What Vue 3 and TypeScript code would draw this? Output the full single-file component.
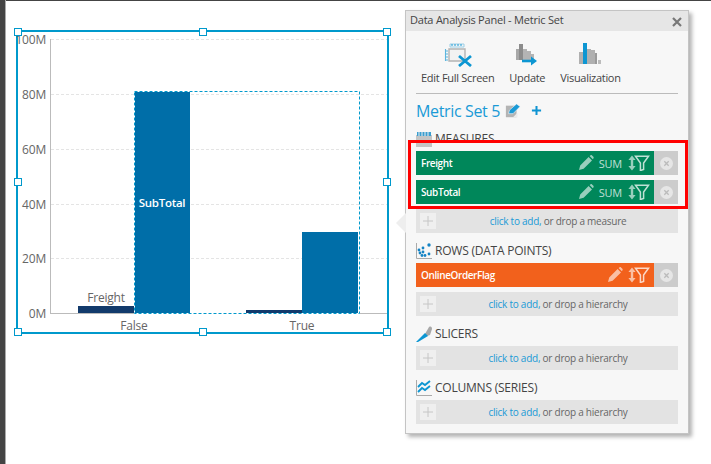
<script setup lang="ts">
interface Field { name: string; color: string; sum: boolean }
interface Section { title: string; icon: string; fields: Field[]; drop: string }

const sections: Section[] = [
  {
    title: 'MEASURES',
    icon: 'measures',
    drop: 'measure',
    fields: [
      { name: 'Freight', color: 'green', sum: true },
      { name: 'SubTotal', color: 'green', sum: true },
    ],
  },
  {
    title: 'ROWS (DATA POINTS)',
    icon: 'rows',
    drop: 'hierarchy',
    fields: [{ name: 'OnlineOrderFlag', color: 'orange', sum: false }],
  },
  { title: 'SLICERS', icon: 'slicers', drop: 'hierarchy', fields: [] },
  { title: 'COLUMNS (SERIES)', icon: 'columns', drop: 'hierarchy', fields: [] },
]

const grid = [
  { y: 39, label: '100M' },
  { y: 94, label: '80M' },
  { y: 149, label: '60M' },
  { y: 204, label: '40M' },
  { y: 258, label: '20M' },
  { y: 313, label: '0M' },
]

const handles = [
  [0, 0], [50, 0], [100, 0],
  [0, 50], [100, 50],
  [0, 100], [50, 100], [100, 100],
]
</script>

<template>
  <div class="page">
    <div class="strip"></div>
    <div class="canvas">
      <div class="selection">
        <svg class="chart" viewBox="18 32 369 300" width="369" height="300">
          <line v-for="g in grid.slice(0, 5)" :key="g.y" x1="51" :x2="387" :y1="g.y + 0.5" :y2="g.y + 0.5" class="gridline" />
          <line x1="50.5" x2="50.5" y1="39" y2="314" class="axis" />
          <line x1="50" x2="387" y1="313.5" y2="313.5" class="axis" />
          <text v-for="g in grid" :key="g.label" x="46" :y="g.y + 4.5" text-anchor="end" class="tick">{{ g.label }}</text>
          <rect x="78" y="306" width="56" height="7" fill="#123a6b" />
          <rect x="135" y="92" width="55" height="221" fill="#006ea8" />
          <rect x="246" y="310" width="56" height="3" fill="#123a6b" />
          <rect x="302" y="232" width="56" height="81" fill="#006ea8" />
          <rect x="134.5" y="91.5" width="225" height="222" class="dash-under" />
          <rect x="134.5" y="91.5" width="225" height="222" class="dash-over" />
          <text x="106" y="302" text-anchor="middle" class="tick">Freight</text>
          <text x="162" y="207" text-anchor="middle" class="inside">SubTotal</text>
          <text x="134" y="330" text-anchor="middle" class="tick">False</text>
          <text x="302" y="330" text-anchor="middle" class="tick">True</text>
        </svg>
        <span
          v-for="h in handles"
          :key="h.join('-')"
          class="handle"
          :style="{ left: h[0] + '%', top: h[1] + '%' }"
        ></span>
      </div>

      <aside class="panel">
        <span class="pointer"></span>
        <header class="panel-head">
          <span>Data Analysis Panel - Metric Set</span>
          <svg class="close" viewBox="0 0 10 10" width="10" height="10">
            <path d="M1 1 9 9M9 1 1 9" stroke="#777" stroke-width="2.2" fill="none" />
          </svg>
        </header>
        <div class="panel-body">
          <nav class="toolbar">
            <div class="tool">
              <svg viewBox="0 0 28 24" width="28" height="24">
                <path d="M6 1h14v3H6z" fill="none" stroke="#9ccfe6" stroke-width="1" />
                <path d="M8 1v2M11 1v2M14 1v2M17 1v2" stroke="#1a9ad6" stroke-width="1" />
                <path d="M5 6h16v12H5z" fill="#f2f2f2" stroke="#b4b4b4" stroke-width="1.4" />
                <path d="M1.5 6v12M1 8h3M1 11h3M1 14h3M1 17h3" stroke="#5cb5dd" stroke-width="1.1" fill="none" />
                <path d="M15 13l12 10M27 13 15 23" stroke="#0d96d2" stroke-width="2.8" />
              </svg>
              <span>Edit Full Screen</span>
            </div>
            <div class="tool">
              <svg viewBox="0 0 22 24" width="22" height="24">
                <path d="M0 6h3v11H0z" fill="#a8a8a8" />
                <path d="M3 1h4v16H3z" fill="#8c8c8c" />
                <path d="M7 6h4v11H7zM11 8h4v9h-4zM15 11h3v6h-3z" fill="#b4b4b4" />
                <path d="M6 18h12" stroke="#0d96d2" stroke-width="2.6" />
                <path d="M15 13.5 21 18l-6 4.5z" fill="#0d96d2" />
              </svg>
              <span>Update</span>
            </div>
            <div class="tool">
              <svg viewBox="0 0 24 24" width="24" height="24">
                <path d="M1 9h4v12H1z" fill="#b0b0b0" />
                <path d="M5 0h4v21H5z" fill="#0d96d2" />
                <path d="M9 6h4v15H9zM13 7h4v14h-4z" fill="#b0b0b0" />
                <path d="M17 10h2v11h-2z" fill="#9a9a9a" />
                <path d="M20 17h3v4h-3z" fill="#bcbcbc" />
              </svg>
              <span>Visualization</span>
            </div>
          </nav>

          <div class="title">
            <span>Metric Set 5</span>
            <svg viewBox="0 0 18 18" width="16" height="16">
              <path d="M1 3h12v13H1z" fill="#b4b4b4" />
              <path d="M9 16l5-5v5z" fill="#ececec" />
              <path d="M4 12l1-4 8-7 4 3-8 8z" fill="#1a9ad6" stroke="#f7f7f7" stroke-width=".7" />
            </svg>
            <svg class="plus" viewBox="0 0 12 12" width="11" height="11">
              <path d="M6 1v10M1 6h10" stroke="#0f94d2" stroke-width="2.2" />
            </svg>
          </div>

          <section v-for="s in sections" :key="s.title" class="section">
            <h3 class="heading">
              <svg viewBox="0 0 16 16" width="16" height="16">
                <template v-if="s.icon === 'measures'">
                  <path d="M0 4h16v12H0z" fill="#c4c4c4" />
                  <path d="M1 1h14v4H1z" fill="#3a9ed0" />
                  <path d="M3 1v4M6 1v4M9 1v4M12 1v4" stroke="#f0f0f0" stroke-width="1" />
                </template>
                <template v-else-if="s.icon === 'rows'">
                  <path d="M.5 0v15.5H16" stroke="#aaa" fill="none" />
                  <g fill="#1583c4">
                    <circle cx="3" cy="7" r="1.4" /><circle cx="7" cy="5" r="1.4" /><circle cx="13" cy="2" r="1.7" />
                    <circle cx="4" cy="10" r="1.4" /><circle cx="7" cy="9" r="1.4" /><circle cx="6" cy="12.5" r="1.4" />
                    <circle cx="9" cy="12.5" r="1.4" /><circle cx="13" cy="11" r="1.4" />
                  </g>
                </template>
                <template v-else-if="s.icon === 'slicers'">
                  <path d="M9 8 13 1c2-1 3 0 3 2l-2 6-3 1z" fill="#a8a8a8" />
                  <path d="M0 16 9 7l3 3-5 3-5 3z" fill="#0d96d2" />
                </template>
                <template v-else>
                  <path d="M.5 0v15.5H16" stroke="#aaa" fill="none" />
                  <path d="M2 7l4-4 3 2 5-4M2 12l4-4 3 2 5-4" stroke="#0d96d2" stroke-width="1.9" fill="none" />
                </template>
              </svg>
              <span class="heading-text">{{ s.title }}</span>
            </h3>
            <div v-for="f in s.fields" :key="f.name" class="field">
              <div class="field-main" :class="f.color">
                <span class="field-name">{{ f.name }}</span>
                <svg class="pencil" viewBox="0 0 16 16" width="16" height="16">
                  <path d="M1 15l1.2-4.6L10.6 2l3.4 3.4-8.4 8.4zM11.6 1l.8-.6c.6-.4 1-.4 1.6 0l1.4 1.4c.4.6.4 1 0 1.6l-.6.8z" />
                </svg>
                <span v-if="f.sum" class="sum">SUM</span>
                <svg class="sort" viewBox="0 0 22 16" width="22" height="16">
                  <path d="M4 .5 7.6 5H5.2v6h2.4L4 15.5.4 11h2.4V5H.4z" />
                  <path d="M7.5 1.2h13L15.6 8v6.5l-3.2 1V8z" fill="none" class="funnel" />
                </svg>
              </div>
              <div class="field-remove">
                <svg viewBox="0 0 12 12" width="13" height="13">
                  <circle cx="6" cy="6" r="6" fill="#e6e6e6" />
                  <path d="M4 4l4 4M8 4 4 8" stroke="#bbb" stroke-width="1.2" />
                </svg>
              </div>
            </div>
            <div class="drop">
              <span class="drop-plus">
                <svg viewBox="0 0 10 10" width="10" height="10">
                  <path d="M5 0v10M0 5h10" stroke="#c6c6c6" stroke-width="1" />
                </svg>
              </span>
              <span class="drop-text"><span class="link">click to add,</span> or drop a {{ s.drop }}</span>
            </div>
          </section>
        </div>
        <div class="highlight"></div>
      </aside>
    </div>
  </div>
</template>

<style>
html, body { margin: 0; background: #fff; }
</style>

<style scoped>
.page {
  width: 711px;
  height: 464px;
  display: flex;
  overflow: hidden;
  background: #fff;
  font-family: "Open Sans", "Noto Sans", sans-serif;
}
.strip {
  width: 5px;
  flex: none;
  background: #444;
  border-right: 1px solid #aaa;
}
.canvas {
  position: relative;
  flex: 1;
  border-top: 1px solid #444;
}
.selection {
  position: absolute;
  left: 10px;
  top: 29px;
  width: 369px;
  height: 300px;
  border: 2px solid #0099cc;
}
.chart { display: block; overflow: visible; }
.gridline { stroke: #e4e4e4; stroke-dasharray: 3 2; }
.axis { stroke: #bbb; }
.tick { font-size: 12px; letter-spacing: -.2px; fill: #666; }
.inside { font-size: 11.5px; font-weight: 600; letter-spacing: -.3px; fill: #fff; }
.dash-under { fill: none; stroke: #fff; }
.dash-over { fill: none; stroke: #0099cc; stroke-dasharray: 3 2; }
.handle {
  position: absolute;
  box-sizing: border-box;
  width: 8px;
  height: 8px;
  margin: -4px 0 0 -4px;
  background: #fff;
  border: 1px solid #0099cc;
}
.panel {
  position: absolute;
  left: 399px;
  top: 9px;
  width: 282px;
  height: 422px;
  background: #f7f7f7;
  border: 1px solid #c4c4c4;
  box-shadow: 3px 3px 4px rgba(0, 0, 0, .3);
  color: #444;
}
.pointer {
  position: absolute;
  left: -10px;
  top: 202px;
  width: 0;
  height: 0;
  border: solid transparent;
  border-width: 10px 10px 10px 0;
  border-right-color: #eee;
}
.panel-head {
  box-sizing: border-box;
  height: 20px;
  padding: 0 6px 3px 4px;
  display: flex;
  align-items: center;
  justify-content: space-between;
  background: #e6e6e6;
  font-size: 11px;
  letter-spacing: -.22px;
  color: #444;
}
.close { margin-top: 5px; }
.panel-body { padding: 0 10px; }
.toolbar {
  display: flex;
  gap: 15px;
  padding: 12px 5px 8px;
  border-bottom: 1px solid #bbb;
}
.tool {
  display: flex;
  flex-direction: column;
  align-items: center;
  gap: 4px;
  font-size: 11px;
  line-height: 14px;
  letter-spacing: -.3px;
  color: #444;
}
.title {
  display: flex;
  align-items: center;
  gap: 5px;
  height: 21px;
  margin-top: 6px;
  font-size: 16px;
  letter-spacing: -.35px;
  color: #1a9ad6;
}
.plus { margin-left: 5px; }
.heading {
  box-sizing: border-box;
  height: 30px;
  margin: 0;
  padding: 10px 0 4px;
  display: flex;
  align-items: center;
  gap: 3px;
  font-size: 12px;
  font-weight: 400;
  letter-spacing: -.22px;
  color: #444;
}
.heading-text { margin-bottom: 2px; }
.field {
  display: flex;
  height: 24px;
  margin-bottom: 5px;
}
.field-main {
  flex: 1;
  display: flex;
  align-items: center;
  padding: 0 4px 0 5px;
  color: #fff;
}
.field-main.green { background: #00875a; }
.field-main.orange { background: #f2611c; }
.field-name { flex: 1; font-size: 10px; font-weight: 600; letter-spacing: -.4px; margin-bottom: 1px; }
.pencil, .sort { fill: rgba(255, 255, 255, .6); }
.pencil { margin-right: 5px; }
.sum { font-size: 11px; letter-spacing: -.2px; color: rgba(255, 255, 255, .75); margin-right: 6px; }
.funnel { stroke: rgba(255, 255, 255, .75); stroke-width: 1.5; }
.field-remove {
  width: 24px;
  display: flex;
  align-items: center;
  justify-content: center;
  background: #ccc;
}
.drop {
  height: 24px;
  padding: 0 4px;
  display: flex;
  align-items: center;
  background: #e3e3e3;
  font-size: 10px;
  letter-spacing: -.25px;
  color: #666;
}
.drop-plus {
  width: 16px;
  height: 16px;
  display: flex;
  align-items: center;
  justify-content: center;
  background: #efefef;
}
.drop-text { flex: 1; text-align: center; padding-left: 6px; }
.link { color: #1a9ad6; }
.highlight {
  position: absolute;
  left: 2px;
  top: 129px;
  width: 274px;
  height: 63px;
  border: 3px solid #f00;
  pointer-events: none;
}
</style>
